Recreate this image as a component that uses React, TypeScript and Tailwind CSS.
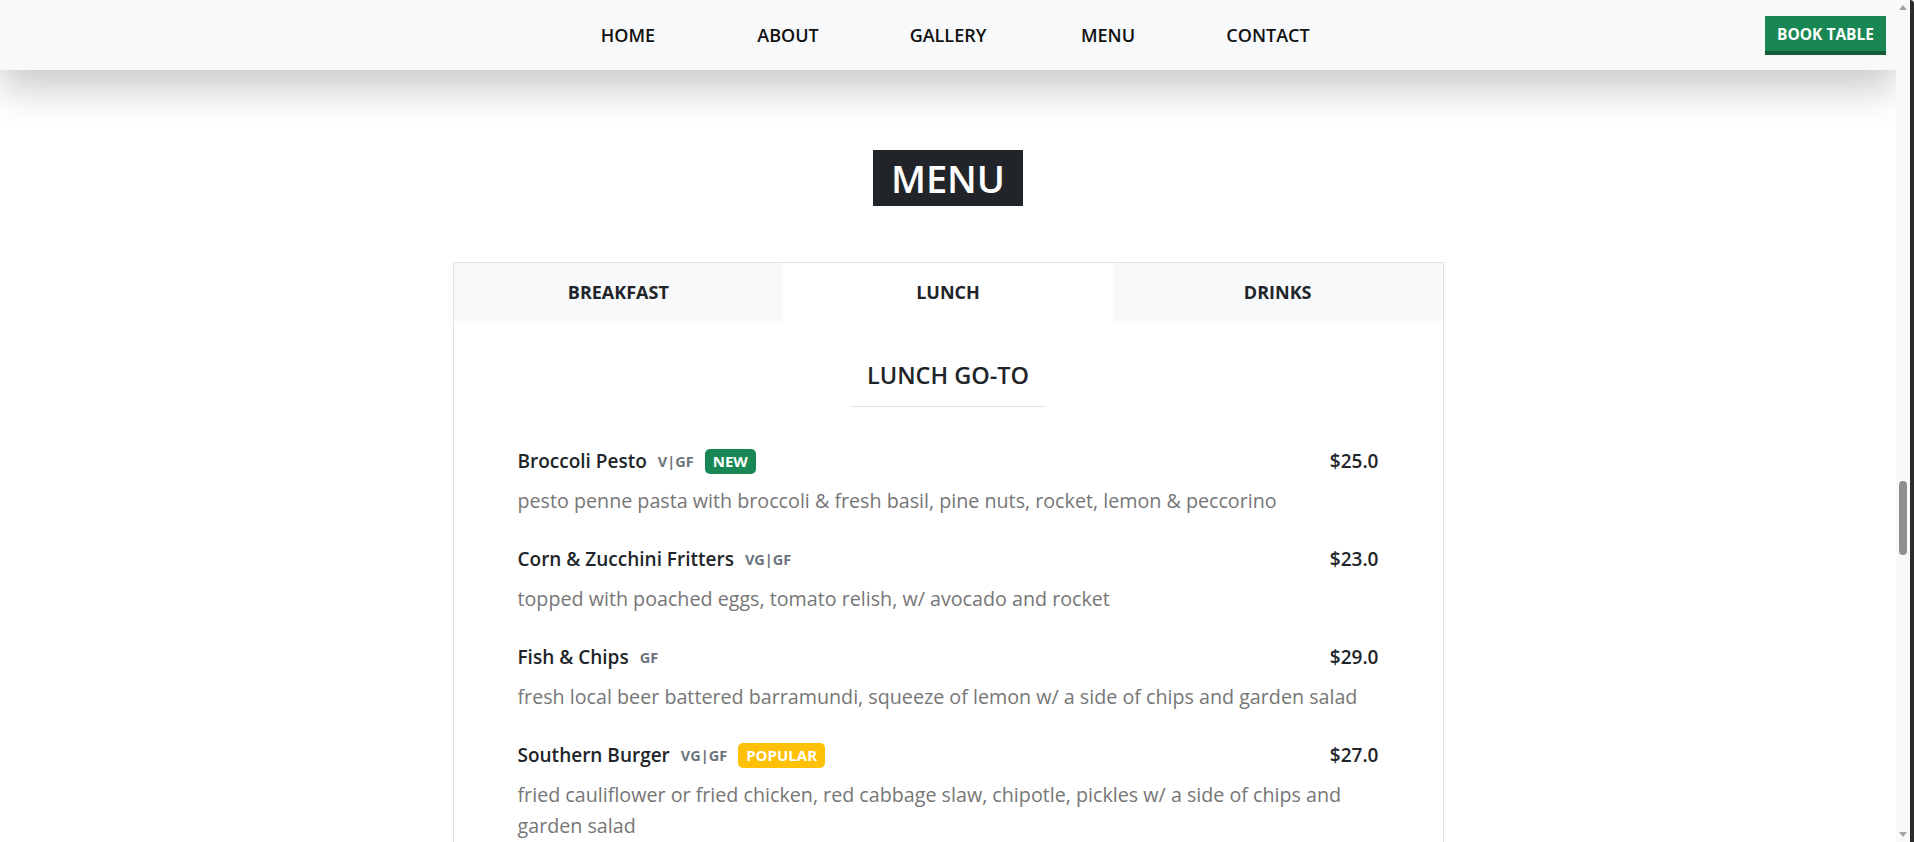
import React from 'react';

type Item = {
  name: string;
  tags: string;
  badge?: 'NEW' | 'POPULAR';
  price: string;
  desc: string;
};

const lunchItems: Item[] = [
  {
    name: 'Broccoli Pesto',
    tags: 'V|GF',
    badge: 'NEW',
    price: '$25.0',
    desc: 'pesto penne pasta with broccoli & fresh basil, pine nuts, rocket, lemon & peccorino',
  },
  {
    name: 'Corn & Zucchini Fritters',
    tags: 'VG|GF',
    price: '$23.0',
    desc: 'topped with poached eggs, tomato relish, w/ avocado and rocket',
  },
  {
    name: 'Fish & Chips',
    tags: 'GF',
    price: '$29.0',
    desc: 'fresh local beer battered barramundi, squeeze of lemon w/ a side of chips and garden salad',
  },
  {
    name: 'Southern Burger',
    tags: 'VG|GF',
    badge: 'POPULAR',
    price: '$27.0',
    desc: 'fried cauliflower or fried chicken, red cabbage slaw, chipotle, pickles w/ a side of chips and garden salad',
  },
];

const navLinks = ['HOME', 'ABOUT', 'GALLERY', 'MENU', 'CONTACT'];
const tabs = ['BREAKFAST', 'LUNCH', 'DRINKS'];

function Navbar() {
  return (
    <nav className="relative z-10 grid h-[70px] grid-cols-[1fr_auto_1fr] items-center bg-[#f8f9fa] shadow-[0_18px_40px_rgba(0,0,0,0.22)]">
      <div />
      <ul className="flex">
        {navLinks.map((link) => (
          <li key={link} className="w-[160px] text-center text-[18px] font-semibold text-[#111]">
            {link}
          </li>
        ))}
      </ul>
      <div className="flex justify-end pr-[10px]">
        <button className="h-[39px] w-[121px] border-b-4 border-[#145c37] bg-[#198754] pt-[4px] text-[15.5px] font-bold text-white">
          BOOK TABLE
        </button>
      </div>
    </nav>
  );
}

function MenuRow({ item }: { item: Item }) {
  return (
    <div>
      <div className="flex items-center justify-between text-[19px] font-semibold leading-[27px] text-[#212529]">
        <div className="flex items-center">
          <span>{item.name}</span>
          <span className="ml-[11px] text-[14.5px] font-bold text-[#6c757d]">{item.tags}</span>
          {item.badge === 'NEW' && (
            <span className="ml-[11px] flex h-[25px] items-center rounded-[5px] bg-[#198754] px-2 text-[15px] font-bold text-white">
              NEW
            </span>
          )}
          {item.badge === 'POPULAR' && (
            <span className="ml-[11px] flex h-[25px] items-center rounded-[5px] bg-[#ffc107] px-2 text-[15px] font-bold text-white">
              POPULAR
            </span>
          )}
        </div>
        <span>{item.price}</span>
      </div>
      <p className="mt-[10px] text-[19.7px] leading-[31px] text-[#767676]">{item.desc}</p>
    </div>
  );
}

export default function App() {
  return (
    <div
      className="flex h-[842px] overflow-hidden bg-white"
      style={{ fontFamily: '"Open Sans", "Noto Sans", sans-serif' }}
    >
      <main className="flex-1 overflow-hidden">
        <Navbar />

        <section className="flex flex-col items-center pt-[80px]">
          <h1 className="bg-[#212529] px-[18px] py-[4px] text-[38px] font-semibold leading-[48px] text-white">
            MENU
          </h1>

          <div className="mt-[56px] w-[991px] border border-[#dee2e6]">
            <div className="flex">
              {tabs.map((tab) => (
                <div
                  key={tab}
                  className={
                    tab === 'LUNCH'
                      ? 'flex h-[58px] flex-1 items-center justify-center bg-white text-[18px] font-bold text-[#212529]'
                      : 'flex h-[58px] flex-1 items-center justify-center bg-[#f8f9fa] text-[18px] font-bold text-[#212529]'
                  }
                >
                  {tab}
                </div>
              ))}
            </div>

            <div className="px-16 pt-[40px] pb-16">
              <div className="flex justify-center">
                <h4 className="border-b border-[#dee2e6] px-4 pb-[16px] text-[23.5px] font-semibold leading-[29px] text-[#212529]">
                  LUNCH GO-TO
                </h4>
              </div>

              <div className="mt-[41px] flex flex-col gap-[30px]">
                {lunchItems.map((item) => (
                  <MenuRow key={item.name} item={item} />
                ))}
              </div>
            </div>
          </div>
        </section>
      </main>

      {/* browser scrollbar */}
      <aside className="relative z-20 flex w-[18px] shrink-0">
        <div className="flex w-[14px] flex-col items-center bg-[#f9f9f9]">
          <div className="mt-[5px] h-0 w-0 border-x-[4px] border-b-[5px] border-x-transparent border-b-[#a3a3a3]" />
          <div className="mt-[471px] h-[74px] w-[8px] rounded-full bg-[#8f8f8f]" />
          <div className="mt-auto mb-[5px] h-0 w-0 border-x-[4px] border-t-[5px] border-x-transparent border-t-[#a3a3a3]" />
        </div>
        <div className="w-[4px] rounded-tr-[4px] bg-[#2b2b2b]" />
      </aside>
    </div>
  );
}
